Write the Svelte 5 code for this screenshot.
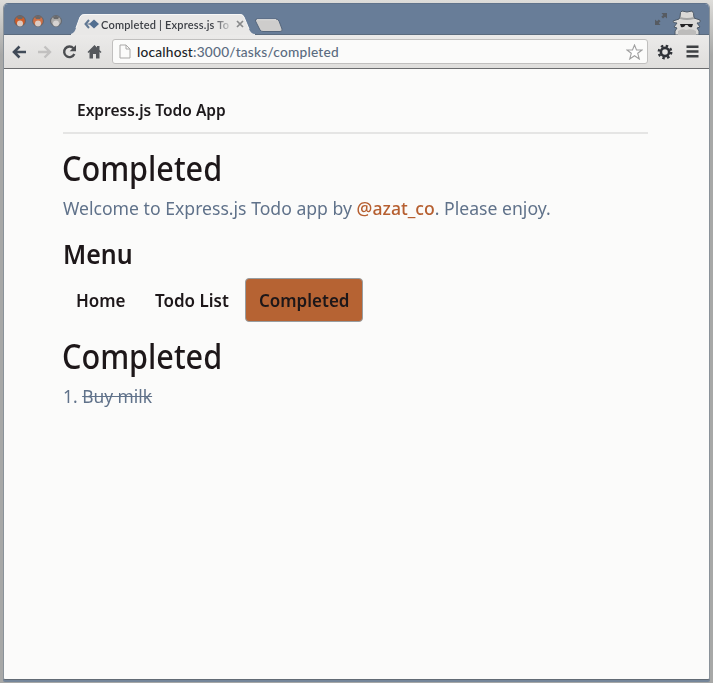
<script>
  const menu = [
    { label: 'Home', width: 79 },
    { label: 'Todo List', width: 103 },
    { label: 'Completed', width: 118, active: true }
  ];
  const lights = ['#cf5c28', '#d07045', '#aaa9a8'];
</script>

<div class="desktop">
  <div class="window">
    <header class="titlebar">
      <div class="lights">
        {#each lights as color}
          <svg width="14" height="14" viewBox="0 0 14 14">
            <circle cx="7" cy="7" r="5.4" fill={color} stroke="#606368" stroke-width="1" />
            <path d="M4 3.2Q7 1 10 3.2L9 5H5Z" fill="#68696b" />
            <ellipse cx="7" cy="9.5" rx="3" ry="3" fill="#dedbd8" opacity=".85" />
          </svg>
        {/each}
      </div>
      <div class="tab">
        <svg class="tabshape" width="184" height="22" viewBox="0 0 184 22">
          <path d="M0 22V20C3 19 4 17 5 14L9 3Q10 0 14 0H169Q172 0 173 3L178 15Q180 20 184 20V22Z" fill="#e9e8e7" />
          <path d="M5 14L9 3Q10 .5 14 .5H169Q172 .5 173 3L178 15" fill="none" stroke="#f7f7f6" />
        </svg>
        <svg class="favicon" width="16" height="12" viewBox="0 0 16 12">
          <path d="M5 2L1.5 6L5 10" fill="none" stroke="#627994" stroke-width="2" />
          <path d="M5 6L10 1.5L15 6L10 10.5Z" fill="#526f91" />
          <path d="M1.5 6H7" fill="none" stroke="#627994" stroke-width="1" />
        </svg>
        <span class="tabtitle">Completed | Express.js To</span>
        <svg class="close" width="8" height="8" viewBox="0 0 8 8"><path d="M1 1L7 7M7 1L1 7" stroke="#88898a" stroke-width="1.7" /></svg>
      </div>
      <svg class="newtab" width="30" height="15" viewBox="0 0 30 15">
        <path d="M3 1H22Q24 1 25 3L28 11Q29 13.5 26 13.5H9Q7 13.5 6 12L1.5 3Q1 1 3 1Z" fill="#cecdcc" stroke="#54657b" />
        <path d="M3 1.7H22" stroke="#e3e2e1" />
      </svg>
      <span class="grow"></span>
      <svg class="expand" width="14" height="14" viewBox="0 0 14 14" fill="#565b62">
        <path d="M7.5 1H13V6.5L11 4.7L9 6.5L7.3 4.8L9.2 3ZM1 7.5V13H6.5L4.7 11L6.6 9.2L4.8 7.4L3 9.2Z" />
      </svg>
      <svg class="spy" width="30" height="25" viewBox="0 0 30 25">
        <path d="M8 7Q8 1 10 1L15 2L20 1Q22 2 22 8L28 10Q29 13 25 13L28 17L25 18L27 21V25H3V21L5 18L2 17L5 13Q0 13 1 11L7 9Z" fill="#dad9d7" stroke="#4e5a68" stroke-width="1" />
        <path d="M8 7Q15 9 22 7V9Q15 11 8 9Z" fill="#a3a4a4" />
        <path d="M8 14H21L20 17Q17 18 15.5 15H13.5Q12 18 9 17Z" fill="#242426" />
        <path d="M6 21Q10 18 14 20Q20 18 24 21V25H6Z" fill="#bdbcbb" />
      </svg>
    </header>
    <div class="toolbar">
      <div class="nav">
        <svg width="15" height="14" viewBox="0 0 15 14"><path d="M7.5 1.5L2 7L7.5 12.5M2 7H14" fill="none" stroke="#414b58" stroke-width="2.6" /></svg>
        <svg width="15" height="14" viewBox="0 0 15 14"><path d="M7.5 1.5L13 7L7.5 12.5M13 7H1" fill="none" stroke="#c2c1c0" stroke-width="2.4" /></svg>
        <svg width="15" height="14" viewBox="0 0 15 14"><path d="M11.4 3.2A5.3 5.3 0 1 0 12.3 9" fill="none" stroke="#4c4e51" stroke-width="2.4" /><path d="M14 0V6.3H7.7Z" fill="#4c4e51" /></svg>
        <svg width="15" height="14" viewBox="0 0 15 14"><path d="M.5 7L7.5 0L10 2.5V1H12.5V5L14.5 7L13.5 8L12.5 7V13.5H9V9H6V13.5H2.5V7L1.5 8Z" fill="#55585c" /></svg>
      </div>
      <div class="address">
        <svg width="12" height="15" viewBox="0 0 12 15"><path d="M1 1H7L11 5V14H1ZM7 1V5H11" fill="none" stroke="#a9a8a7" /></svg>
        <span class="url">localhost<span>:3000/tasks/completed</span></span>
        <svg class="star" width="17" height="16" viewBox="0 0 17 16"><path d="M8.5 1L10.5 6H16L11.7 9.3L13.3 15L8.5 11.7L3.7 15L5.3 9.3L1 6H6.5Z" fill="#fff" stroke="#a0a0a0" stroke-width="1.1" /></svg>
      </div>
      <svg class="gear" width="16" height="16" viewBox="-8 -8 16 16">
        <circle r="6.2" fill="none" stroke="#303338" stroke-width="2.4" stroke-dasharray="2.43 2.44" />
        <circle r="4.1" fill="none" stroke="#303338" stroke-width="2.6" />
      </svg>
      <svg class="burger" width="13" height="13" viewBox="0 0 13 13"><path d="M.5 1.7H12.5M.5 6.5H12.5M.5 11.3H12.5" stroke="#3e4043" stroke-width="2.6" /></svg>
    </div>
    <main>
      <div class="brand"><span>Express.js Todo App</span></div>
      <h1><span>Completed</span></h1>
      <p class="welcome"><span>Welcome to Express.js Todo app by <b>@azat_co</b>. Please enjoy.</span></p>
      <h2><span>Menu</span></h2>
      <nav>
        {#each menu as item}
          <div class="item" class:active={item.active} style="width: {item.width}px"><span>{item.label}</span></div>
        {/each}
      </nav>
      <h1 class="second"><span>Completed</span></h1>
      <p class="task"><span>1. <s>Buy milk</s></span></p>
    </main>
  </div>
</div>

<style>
  * { box-sizing: border-box; }
  svg { display: block; flex: none; }
  .desktop { width: 713px; height: 683px; padding: 3px 3px 2px 3px; background: linear-gradient(#deddda, #a7a8a7 55px, #a7a8a7); font-family: "Noto Sans", sans-serif; overflow: hidden; }
  .window { height: 677px; border: 1px solid #8a9299; border-top-color: #60738b; border-bottom: 1px solid #626b74; border-radius: 5px 5px 2px 2px; overflow: hidden; background: #fbfbfa; box-shadow: 0 2px 0 #75869a; }
  .titlebar { height: 31px; background: #687d98; display: flex; align-items: flex-start; padding-left: 9px; border-bottom: 1px solid #5b6b7e; }
  .lights { display: flex; gap: 4px; margin-top: 10px; width: 50px; }
  .tab { position: relative; width: 184px; height: 22px; margin: 10px 0 -1px 8px; display: flex; align-items: center; padding-left: 13px; }
  .tabshape { position: absolute; left: 0; top: 0; }
  .favicon, .tabtitle, .close { position: relative; top: -1px; }
  .tabtitle { font: 600 11px "Lato", sans-serif; letter-spacing: .2px; white-space: nowrap; width: 131px; margin-left: 1px; color: #3c3f45; overflow: hidden; -webkit-mask-image: linear-gradient(90deg, #000 112px, transparent 132px); mask-image: linear-gradient(90deg, #000 112px, transparent 132px); }
  .close { margin-left: 4px; }
  .newtab { margin: 14px 0 0 -1px; }
  .grow { flex: 1; }
  .expand { margin-top: 8px; }
  .spy { margin: 6px 7px 0 4px; }
  .toolbar { height: 34px; display: flex; align-items: center; background: linear-gradient(#ebeae9, #dfdedc); border-bottom: 1px solid #6b6c6e; padding: 0 8px 0 8px; position: relative; }
  .nav { display: flex; gap: 10px; width: 100px; flex: none; }
  .address { flex: none; width: 536px; height: 25px; border: 1px solid #c0bfbe; border-radius: 3px; background: #fbfbfa; display: flex; align-items: center; padding: 0 4px 0 6px; }
  .url { flex: 1; margin-left: 6px; font: 500 13.7px "Lato", sans-serif; letter-spacing: .22px; color: #202328; white-space: nowrap; }
  .url span { color: #5a6b80; }
  .gear { margin-left: 9px; }
  .burger { margin-left: 13px; }
  main { padding: 17px 61px 0 59px; }
  main span { display: inline-block; white-space: nowrap; transform-origin: 0 50%; }
  .brand { height: 48px; border-bottom: 2px solid #e5e5e4; padding: 13px 0 0 14px; font-size: 16px; line-height: 22px; font-weight: 600; color: #1d1a1c; }
  .brand span { transform: scaleX(.97); }
  h1 { height: 44px; margin: 12px 0 0 -1px; font-size: 34px; line-height: 44px; font-weight: 550; color: #1d1719; }
  h1 span { transform: scaleX(.9); }
  p { margin: 5px 0 0; font-size: 18.5px; line-height: 26px; color: #60728a; }
  p span { transform: scaleX(.952); }
  .task span { transform: scaleX(.94); }
  b { color: #b65f30; font-weight: 500; }
  h2 { height: 36px; margin: 15px 0 0; font-size: 27px; line-height: 36px; font-weight: 600; color: #1d1719; }
  h2 span { transform: scaleX(.925); }
  nav { display: flex; height: 44px; margin-top: 6px; }
  .item { height: 44px; display: flex; align-items: center; padding: 0 0 1px 13px; font-size: 18.5px; font-weight: 600; color: #1d1719; }
  .item span { transform: scaleX(.918); }
  .active { border: 1px solid #989da0; border-radius: 4px; background: #b66333; }
  .second { margin-top: 12px; }
  s { text-decoration-thickness: 1px; }
</style>
